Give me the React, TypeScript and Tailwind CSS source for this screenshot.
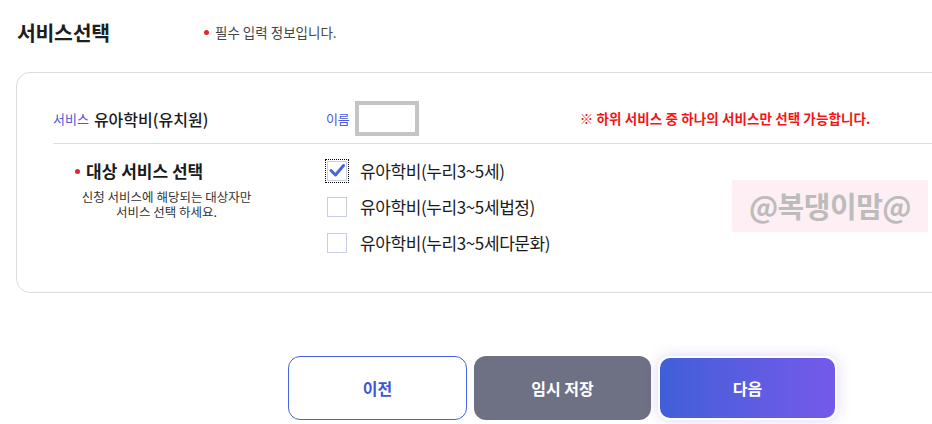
import React from "react";

const font = { fontFamily: '"Noto Sans CJK KR", "Noto Sans", sans-serif' };

function Checkbox({ checked }: { checked?: boolean }) {
  return (
    <span className={`relative flex h-[20px] w-[20px] items-center justify-center ${checked ? "outline outline-1 outline-dotted outline-black outline-offset-[1px]" : ""}`}>
      <span className="absolute inset-0 border border-[#c9cfe3] bg-white" />
      {checked && (
        <svg viewBox="0 0 20 20" className="relative h-[20px] w-[20px]">
          <path d="M4 9.5 L8.5 14 L16.5 4.5" fill="none" stroke="#4b63dc" strokeWidth="3" strokeLinecap="round" strokeLinejoin="round" />
        </svg>
      )}
    </span>
  );
}

export default function App() {
  const options = ["유아학비(누리3~5세)", "유아학비(누리3~5세법정)", "유아학비(누리3~5세다문화)"];
  return (
    <div className="relative h-[424px] w-[932px] overflow-hidden bg-white text-[#222]" style={font}>
      {/* Header */}
      <div className="flex items-center pl-[17px] pt-[17px]">
        <h1 className="w-[187px] text-[20.5px] font-semibold leading-[30px] tracking-[-0.3px] text-[#1e1e1e]">서비스선택</h1>
        <p className="flex items-center text-[13.5px] text-[#444]">
          <span className="mr-[6px] inline-block h-[5px] w-[5px] rounded-full bg-[#e0262e]" />
          필수 입력 정보입니다.
        </p>
      </div>

      {/* Card */}
      <div className="ml-[16px] mt-[25px] h-[221px] w-[960px] rounded-[14px] border border-[#dcdcdc] bg-white">
        {/* Row 1 */}
        <div className="ml-[36px] flex items-center border-b border-[#dedede] pb-[7px] pt-[28px]">
          <span className="text-[13px] text-[#4a5bd8]">서비스</span>
          <span className="ml-[5px] w-[232px] text-[16px] font-medium text-[#1a1a1a]">유아학비(유치원)</span>
          <span className="text-[13px] text-[#4a5bd8]">이름</span>
          <span className="ml-[5px] h-[35px] w-[64px] border-4 border-[#c4c4c4] bg-white" />
          <span className="ml-[161px] text-[13.5px] font-bold tracking-[0.1px] text-[#f21616]">※ 하위 서비스 중 하나의 서비스만 선택 가능합니다.</span>
        </div>

        {/* Row 2 */}
        <div className="ml-[36px] flex pt-[15px]">
          <div className="w-[274px]">
            <div className="flex items-center pl-[22px]">
              <span className="mr-[6px] inline-block h-[5px] w-[5px] rounded-full bg-[#e0262e]" />
              <span className="text-[17px] font-bold leading-[24px] text-[#1a1a1a]">대상 서비스 선택</span>
            </div>
            <p className="mt-[6px] w-[227px] text-center text-[12.5px] leading-[15px] tracking-[0px] text-[#333]">
              신청 서비스에 해당되는 대상자만
              <br />
              서비스 선택 하세요.
            </p>
          </div>
          <div className="flex flex-col gap-[12px]">
            {options.map((o, i) => (
              <label key={o} className="flex h-[24px] items-center">
                <Checkbox checked={i === 0} />
                <span className="ml-[13px] text-[17px] leading-[24px] tracking-[-0.4px] text-[#1a1a1a]">{o}</span>
              </label>
            ))}
          </div>
        </div>
      </div>

      {/* Buttons */}
      <div className="ml-[288px] mt-[63px] flex gap-[7px]">
        <button className="h-[64px] w-[179px] rounded-[12px] border border-[#4763df] bg-white text-[16px] font-bold text-[#3f56d2]">이전</button>
        <button className="h-[64px] w-[177px] rounded-[12px] bg-[#6e7084] text-[16px] font-bold text-white">임시 저장</button>
        <button className="h-[64px] w-[179px] rounded-[12px] border-2 border-white bg-gradient-to-r from-[#3f5fd8] to-[#7459ea] text-[16px] font-bold text-white shadow-[0_0_14px_rgba(110,100,220,0.25)]">다음</button>
      </div>

      {/* Watermark overlay */}
      <div className="absolute left-[732px] top-[180px] flex h-[52px] w-[196px] items-center justify-center bg-[#fdeff3]">
        <span className="text-[29px] font-bold tracking-[-0.5px] text-[#bcbcbc]">@복댕이맘@</span>
      </div>
    </div>
  );
}
